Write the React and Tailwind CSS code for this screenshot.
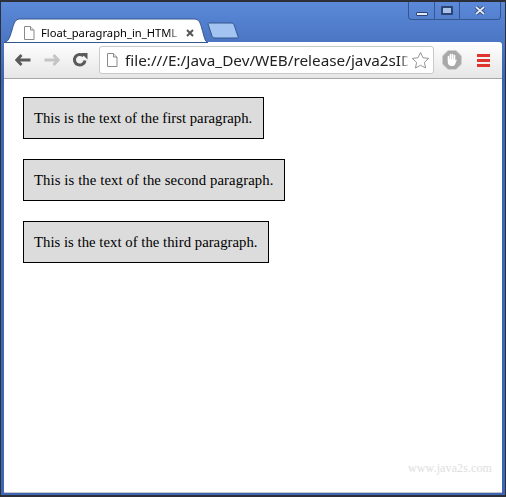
import React from "react";

function FileIcon({ className }) {
  return (
    <svg viewBox="0 0 12 14" className={className} fill="#fff" stroke="#8a8a8a" strokeWidth="1">
      <path d="M1.5.5h6l3.5 3.5v9.5h-9.5z" />
      <path d="M7.5.5v3.5h3.5" fill="#e8e8e8" />
    </svg>
  );
}

function Arrow({ color, flip }) {
  return (
    <svg viewBox="0 0 16 12" className={`w-4 h-3 ${flip ? "-scale-x-100" : ""}`}>
      <path d="M6.500 1 1.800 6l4.700 5M2.500 6H15.500" fill="none" stroke={color} strokeWidth="2.800" />
    </svg>
  );
}

const para = "border border-black bg-[#dcdcdc] pl-[10px] py-[11px] w-fit leading-[18px] text-[14.72px] text-black";

export default function App() {
  return (
    <div className="w-[506px] h-[497px] flex flex-col overflow-hidden border-t-2 border-b-2 border-l border-r border-[#2c2f38] bg-gradient-to-b from-[#5c8ad8] via-[#4a76c4] to-[#3a64b0] bg-[length:100%_80px] bg-no-repeat [background-color:#3d67b4] font-['Liberation_Sans',sans-serif]">
      <div className="h-[18px] flex justify-end pr-[4px] shrink-0">
        <div className="flex h-[18px] w-[93px] border border-t-0 border-[#35568f] rounded-b-[4px]">
          <div className="w-[26px] border-r border-[#35568f] flex items-end justify-center pb-[3px]">
            <div className="w-[12px] h-[4px] bg-[#dfe8f6] border border-[#2b4474] rounded-[1px]" />
          </div>
          <div className="w-[25px] border-r border-[#35568f] flex items-center justify-center">
            <div className="w-[12px] h-[9px] border-2 border-[#2b4474] bg-[#a8c2ea] rounded-[1px]" />
          </div>
          <div className="flex-1 flex items-center justify-center">
            <svg viewBox="0 0 12 9" className="w-3 h-[9px]">
              <path d="M2 1l8 7M10 1l-8 7" stroke="#2b4474" strokeWidth="3.600" />
              <path d="M2 1l8 7M10 1l-8 7" stroke="#e4eaf6" strokeWidth="1.800" />
            </svg>
          </div>
        </div>
      </div>

      <div className="relative h-[22px] shrink-0 flex">
        <svg className="absolute left-[2px] top-[-2px]" width="240" height="26" viewBox="0 0 240 26">
          <path d="M205 6C205 5.500 205.500 5 206.500 5H228C230 5 231 6 231.500 8L235 18.500C235.500 19.500 235 20 234 20H212C210 20 209.500 19 209 18Z" fill="#a3c3f0" stroke="#35568f" />
          <path d="M1 24.500C5 24.500 7 19 9 12 11 5 12 1 17 1H191C196 1 197 4 199 11 201 18 202 24.500 205 24.500Z" fill="#fff" stroke="#35568f" />
        </svg>
        <div className="relative ml-[22px] mt-[4px] flex items-center h-[17px]">
          <FileIcon className="w-[12px] h-[14px]" />
          <span className="ml-[6px] w-[138px] whitespace-nowrap text-[11.2px] leading-[16px] text-black font-['Noto_Sans',sans-serif] [mask-image:linear-gradient(to_right,#000_126px,#0006_138px)]">
            Float_paragraph_in_HTML
          </span>
          <svg viewBox="0 0 8 8" className="w-2 h-2 ml-[7px]">
            <path d="M1 1l6 6M7 1l-6 6" stroke="#555" strokeWidth="2" />
          </svg>
        </div>
      </div>

      <div className="flex-1 mx-[3px] mb-[2px] flex flex-col min-h-0">
        <div className="h-[37px] shrink-0 flex items-center bg-gradient-to-b from-white to-[#e6e6e6] border-b border-[#a8a8a8] rounded-tr-[3px]">
          <div className="ml-[11px]"><Arrow color="#5a5a5a" /></div>
          <div className="ml-[13px]"><Arrow color="#c4c4c4" flip /></div>
          <svg viewBox="0 0 16 16" className="w-4 h-4 ml-[12px]">
            <path d="M13 8.500A5.300 5.300 0 1 1 11.500 4" fill="none" stroke="#5a5a5a" strokeWidth="3" />
            <path d="M9 1h6.500v6.500z" fill="#5a5a5a" />
          </svg>
          <div className="ml-[11px] w-[335px] h-[28px] bg-white border border-[#c9c9c9] rounded-[3px] flex items-center pl-[6px] pr-[3px]">
            <FileIcon className="w-[12px] h-[14px] shrink-0" />
            <span className="ml-[7px] w-[283px] whitespace-nowrap text-[15.3px] text-[#222] font-['Noto_Sans',sans-serif] [mask-image:linear-gradient(to_right,#000_275px,#0003_283px)]">
              file:///E:/Java_Dev/WEB/release/java2sID
            </span>
            <svg viewBox="0 0 20 20" className="w-[19px] h-[19px] ml-[3px] shrink-0">
              <path d="M10 1.500l2.600 5.600 6 .7-4.500 4.100 1.200 6L10 15l-5.300 3 1.200-6L1.400 7.800l6-.7z" fill="#fff" stroke="#8f8f8f" />
            </svg>
          </div>
          <svg viewBox="0 0 20 20" className="w-5 h-5 ml-[8px]">
            <path d="M6 .5h8L19.500 6v8L14 19.500H6L.5 14V6z" fill="#a8a8a8" stroke="#d0d0d0" />
            <path d="M6.500 10V6.500M8.500 10V4.500M10.500 10V4.500M12.500 10V5.500" fill="none" stroke="#fff" strokeWidth="1.600" strokeLinecap="round" />
            <path d="M5.800 9H13.200V10.500L15 9.500 13 14.500C12.500 15.500 11.500 16 10 16 7.500 16 5.800 14.500 5.800 12.500Z" fill="#fff" />
          </svg>
          <div className="ml-[15px] flex flex-col gap-[2px] w-[13px]">
            <div className="h-[3px] bg-[#e0342c]" />
            <div className="h-[3px] bg-[#e0342c]" />
            <div className="h-[3px] bg-[#e0342c]" />
          </div>
        </div>
        <div className="relative flex-1 bg-white border-b border-[#c8c8c8] pt-[18px] pl-[19px] flex flex-col gap-[20px] font-['Liberation_Serif',serif]">
          <p className={`${para} pr-[11px]`}>This is the text of the first paragraph.</p>
          <p className={`${para} pr-[10px] tracking-[0.1px]`}>This is the text of the second paragraph.</p>
          <p className={`${para} pr-[10px] tracking-[0.03px]`}>This is the text of the third paragraph.</p>
          <span className="absolute right-[10px] bottom-[17px] text-[12px] leading-[14px] text-[#dedede] tracking-[0.1px]">www.java2s.com</span>
        </div>
      </div>
    </div>
  );
}
